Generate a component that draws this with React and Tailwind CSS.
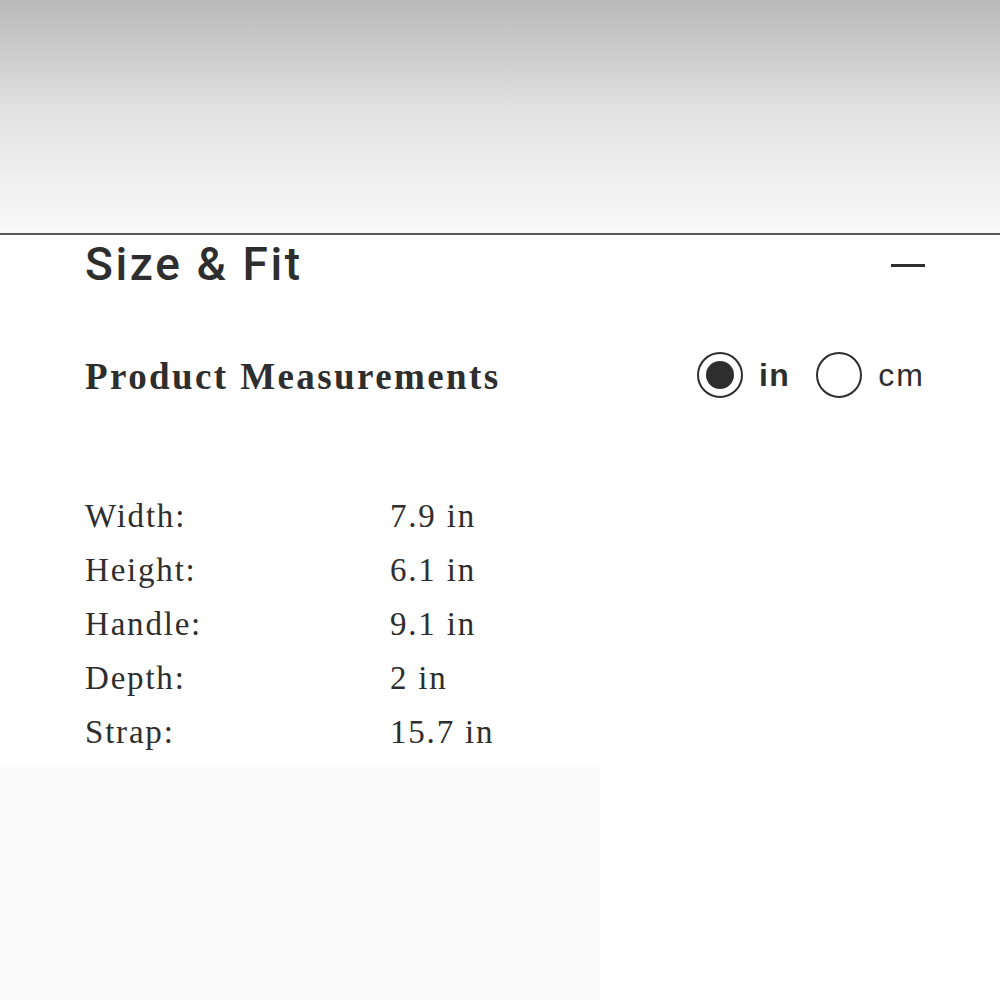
const rows = [
  ['Width:', '7.9 in'],
  ['Height:', '6.1 in'],
  ['Handle:', '9.1 in'],
  ['Depth:', '2 in'],
  ['Strap:', '15.7 in'],
]

export default function App() {
  return (
    <div className="w-[1000px] h-[1000px] bg-white flex flex-col overflow-hidden">
      {/* blurred backdrop above the panel */}
      <div className="h-[233px] bg-gradient-to-b from-[#b9b9b9] via-[#e4e4e4] to-[#f9f9f9]" />
      <div className="h-[2px] bg-[#5a5a5a]" />

      <section className="px-[85px] text-[#2e2e2e]">
        <div className="flex items-center justify-between h-[60px]">
          <h2 className="font-['Roboto',Arial,sans-serif] font-medium text-[46px] tracking-[2.6px] leading-none mt-[-3px]">
            Size &amp; Fit
          </h2>
          <span className="w-[34px] h-[3px] bg-[#2e2e2e] mr-[-10px]" />
        </div>

        <div className="flex items-center justify-between h-[54px] mt-[53px] mr-[-10px]">
          <h3 className="font-['Liberation_Serif',serif] font-bold text-[37px] tracking-[2.4px] leading-none mt-[2px]">
            Product Measurements
          </h3>
          <div className="flex items-center font-['Liberation_Sans',Arial,sans-serif] text-[32px] leading-none">
            <span className="w-[46px] h-[46px] rounded-full border-2 border-[#2e2e2e] flex items-center justify-center">
              <span className="w-[28px] h-[28px] rounded-full bg-[#2e2e2e]" />
            </span>
            <span className="ml-[16px] font-bold tracking-[1.5px]">in</span>
            <span className="ml-[26px] w-[46px] h-[46px] rounded-full border-2 border-[#2e2e2e]" />
            <span className="ml-[16px] tracking-[2px]">cm</span>
          </div>
        </div>

        <div className="mt-[88px] font-['Liberation_Serif',serif] text-[33px] tracking-[1.8px]">
          {rows.map(([k, v]) => (
            <div key={k} className="flex h-[54px] items-center">
              <span className="w-[305px]">{k}</span>
              <span>{v}</span>
            </div>
          ))}
        </div>
      </section>

      <div className="mt-[7px] w-[600px] flex-1 bg-[#fafafa]" />
    </div>
  )
}
